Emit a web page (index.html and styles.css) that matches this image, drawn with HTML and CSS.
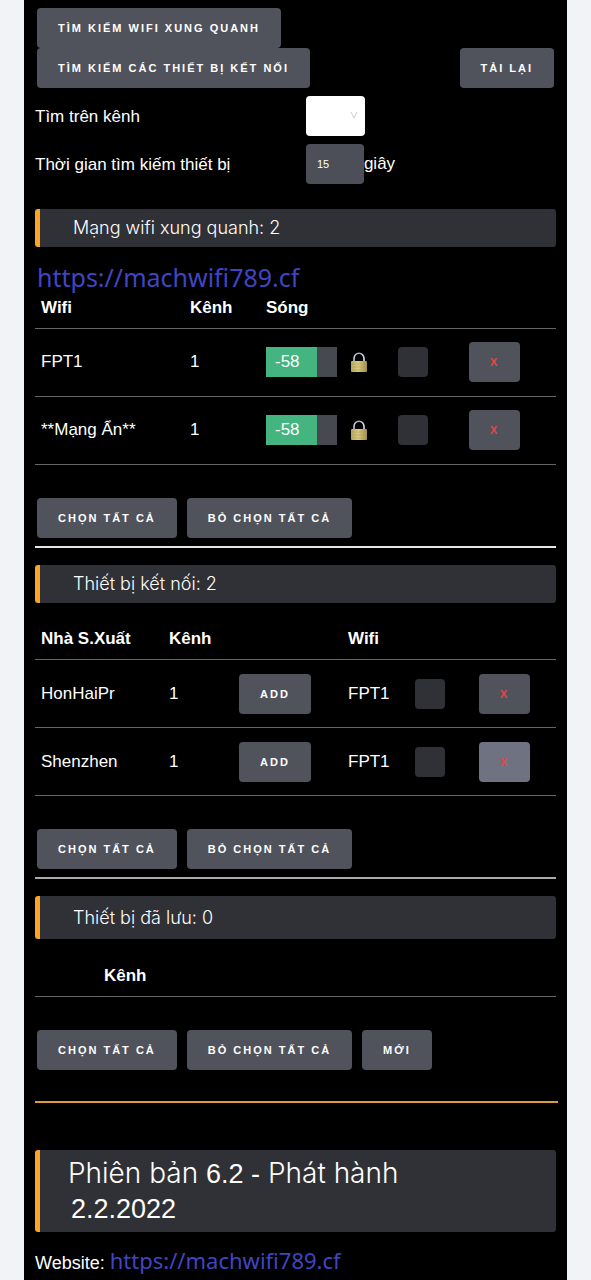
FILE: index.html
```html
<!DOCTYPE html>
<html lang="vi">
<head>
<meta charset="utf-8">
<meta name="viewport" content="width=device-width, initial-scale=1">
<title>Wifi</title>
<link rel="stylesheet" href="styles.css">
</head>
<body>
<svg class="defs" width="0" height="0" aria-hidden="true">
  <defs>
    <linearGradient id="brass" x1="0" x2="1" y1="0" y2="0">
      <stop offset="0" stop-color="#b9a75c"/><stop offset=".45" stop-color="#d8cc86"/><stop offset="1" stop-color="#a08f48"/>
    </linearGradient>
    <linearGradient id="steel" x1="0" x2="1" y1="0" y2="0">
      <stop offset="0" stop-color="#c9ccd6"/><stop offset=".5" stop-color="#a3a6b8"/><stop offset="1" stop-color="#dfe1e8"/>
    </linearGradient>
    <symbol id="lock" viewBox="0 0 16 20">
      <path d="M3 9.500V6.500a5 5.300 0 0 1 10 0v3" fill="none" stroke="url(#steel)" stroke-width="1.600"/>
      <rect x="0" y="9" width="16" height="11" rx="1" fill="url(#brass)"/>
      <path d="M0 12h16M0 15h16M0 18h16" stroke="#a99b56" stroke-width=".5"/>
    </symbol>
  </defs>
</svg>
<main class="page">
  <div class="actions">
    <button class="btn">TÌM KIẾM WIFI XUNG QUANH</button>
    <div class="actions-row">
      <button class="btn">TÌM KIẾM CÁC THIẾT BỊ KẾT NỐI</button>
      <button class="btn">TẢI LẠI</button>
    </div>
  </div>

  <div class="form">
    <label for="channel">Tìm trên kênh</label>
    <div class="field">
      <div class="select-box">
        <select id="channel" class="select"><option></option></select>
        <svg class="chevron" viewBox="0 0 8 8" aria-hidden="true"><path d="M1 1l3 6 3-6" fill="none" stroke="#ccc"/></svg>
      </div>
    </div>
    <label for="time">Thời gian tìm kiếm thiết bị</label>
    <div class="field"><input id="time" class="input" type="text" value="15"><span>giây</span></div>
  </div>

  <h2 class="heading">Mạng wifi xung quanh: 2</h2>
  <a class="link link-large" href="#">https://machwifi789.cf</a>
  <table class="table networks">
    <colgroup><col class="n1"><col class="n2"><col class="n3"><col class="n4"><col class="n5"><col></colgroup>
    <thead><tr><th>Wifi</th><th>Kênh</th><th>Sóng</th><th></th><th></th><th></th></tr></thead>
    <tbody>
      <tr><td>FPT1</td><td>1</td><td><div class="signal"><div class="signal-fill" style="width:72%">-58</div></div></td><td><svg class="lock" role="img" aria-label="WPA"><use href="#lock"/></svg></td><td><input class="check" type="checkbox" aria-label="FPT1"></td><td><button class="btn btn-x">X</button></td></tr>
      <tr><td>**Mạng Ẩn**</td><td>1</td><td><div class="signal"><div class="signal-fill" style="width:72%">-58</div></div></td><td><svg class="lock" role="img" aria-label="WPA"><use href="#lock"/></svg></td><td><input class="check" type="checkbox" aria-label="**Mạng Ẩn**"></td><td><button class="btn btn-x">X</button></td></tr>
    </tbody>
  </table>
  <div class="buttons">
    <button class="btn">CHỌN TẤT CẢ</button>
    <button class="btn">BỎ CHỌN TẤT CẢ</button>
  </div>
  <hr class="rule">

  <h2 class="heading">Thiết bị kết nối: 2</h2>
  <table class="table stations">
    <colgroup><col class="s1"><col class="s2"><col class="s3"><col class="s4"><col class="s5"><col></colgroup>
    <thead><tr><th>Nhà S.Xuất</th><th>Kênh</th><th></th><th>Wifi</th><th></th><th></th></tr></thead>
    <tbody>
      <tr><td>HonHaiPr</td><td>1</td><td><button class="btn">ADD</button></td><td>FPT1</td><td><input class="check" type="checkbox" aria-label="HonHaiPr"></td><td><button class="btn btn-x">X</button></td></tr>
      <tr><td>Shenzhen</td><td>1</td><td><button class="btn">ADD</button></td><td>FPT1</td><td><input class="check" type="checkbox" aria-label="Shenzhen"></td><td><button class="btn btn-x btn-active">X</button></td></tr>
    </tbody>
  </table>
  <div class="buttons">
    <button class="btn">CHỌN TẤT CẢ</button>
    <button class="btn">BỎ CHỌN TẤT CẢ</button>
  </div>
  <hr class="rule rule-dim">

  <h2 class="heading heading-tall">Thiết bị đã lưu: 0</h2>
  <table class="table saved">
    <colgroup><col class="d1"><col></colgroup>
    <thead><tr><th></th><th>Kênh</th></tr></thead>
  </table>
  <div class="buttons">
    <button class="btn">CHỌN TẤT CẢ</button>
    <button class="btn">BỎ CHỌN TẤT CẢ</button>
    <button class="btn">MỚI</button>
  </div>
  <hr class="rule-accent">

  <h1 class="version">Phiên bản <b>6.2 -</b> Phát hành<br><b class="date">2.2.2022</b></h1>
  <p class="site">Website:<a class="link" href="#">https://machwifi789.cf</a></p>
</main>
</body>
</html>
```
FILE: styles.css
```css
* { box-sizing: border-box; }
body {
  margin: 0;
  background: #f1f3f6;
  color: #fff;
  font: 17px/24px "Liberation Sans", Arial, sans-serif;
}
.defs { position: absolute; }
.page {
  margin: 0 24px;
  padding: 8px 11px 2px;
  background: #000;
}
.btn {
  height: 40px;
  padding: 0 21px;
  border: 0;
  border-radius: 4px;
  background: #51535c;
  color: #fff;
  font: bold 11px/40px "Liberation Sans", Arial, sans-serif;
  letter-spacing: 2px;
  white-space: nowrap;
  vertical-align: middle;
}
.btn-x { color: #e0484c; }
.btn-active { background: #6f7280; }
.actions { padding: 0 2px; }
.actions-row { display: flex; justify-content: space-between; }
.actions .btn { display: block; }

.form {
  display: grid;
  grid-template-columns: 52% 1fr;
  row-gap: 8px;
  margin-top: 8px;
  align-items: center;
}
.form label { padding-top: 2px; }
.field { display: flex; align-items: center; }
.select-box { position: relative; width: 59px; height: 40px; }
.select {
  appearance: none;
  width: 100%;
  height: 100%;
  border: 0;
  border-radius: 4px;
  background: #fff;
}
.chevron { position: absolute; right: 7px; top: 15px; width: 8px; height: 8px; pointer-events: none; }
.input {
  width: 58px;
  height: 40px;
  padding: 0 11px;
  border: 0;
  border-radius: 4px;
  background: #4c4f58;
  color: #fff;
  font: 11px "Liberation Sans", Arial, sans-serif;
}

.heading {
  margin: 17px 0 0;
  padding: 0 33px;
  border-left: 5px solid #fda428;
  border-radius: 3px;
  background: #303136;
  font: 300 18px/38px Inter, Roboto, sans-serif;
}
.heading-tall { line-height: 43px; }
.form + .heading { margin-top: 25px; }

.link {
  color: #4145c4;
  font-family: "Noto Sans", sans-serif;
  font-size: 22px;
  text-decoration: none;
}
.link-large {
  display: block;
  margin-top: 14px;
  padding-left: 2px;
  font-size: 25px;
  line-height: 32px;
}

.table { width: 100%; table-layout: fixed; border-collapse: collapse; }
.table th, .table td { padding: 0 6px; border-bottom: 1px solid #666; text-align: left; white-space: nowrap; }
.table th { height: 35px; padding-bottom: 5px; }
.table td { height: 68px; }
.stations { margin-top: 22px; }
.saved { margin-top: 22px; }
.n1 { width: 149px; } .n2 { width: 76px; } .n3 { width: 85px; } .n4 { width: 47px; } .n5 { width: 71px; }
.s1 { width: 128px; } .s2 { width: 70px; } .s3 { width: 109px; } .s4 { width: 67px; } .s5 { width: 64px; }
.d1 { width: 63px; }

.signal { width: 71px; background: #464950; line-height: 30px; }
.signal-fill { padding-left: 9px; background: #44b480; }
.lock { display: block; width: 16px; height: 20px; }
.check {
  appearance: none;
  display: block;
  width: 30px;
  height: 30px;
  margin: 0;
  border-radius: 4px;
  background: #303136;
}

.buttons { display: flex; gap: 10px; margin-top: 33px; padding: 0 2px; }
.rule { height: 2px; margin: 8px 0 0; border: 0; background: #e6e6e6; }
.rule-dim { background: #aaa; }
.rule-accent { height: 2px; margin: 31px -2px 0 0; border: 0; background: #e09a3c; }

.version {
  margin: 47px 0 0;
  padding: 6px 28px;
  border-left: 5px solid #fda428;
  border-radius: 3px;
  background: #303136;
  font: 300 28px/34px Inter, Roboto, sans-serif;
}
.version b { font-family: "Liberation Sans", Arial, sans-serif; font-size: 27px; font-weight: 400; }
.version .date { padding-left: 3px; }
.site { margin: 12px 0 0; font-size: 18px; line-height: 32px; }
.site .link { margin-left: 5px; }
```
